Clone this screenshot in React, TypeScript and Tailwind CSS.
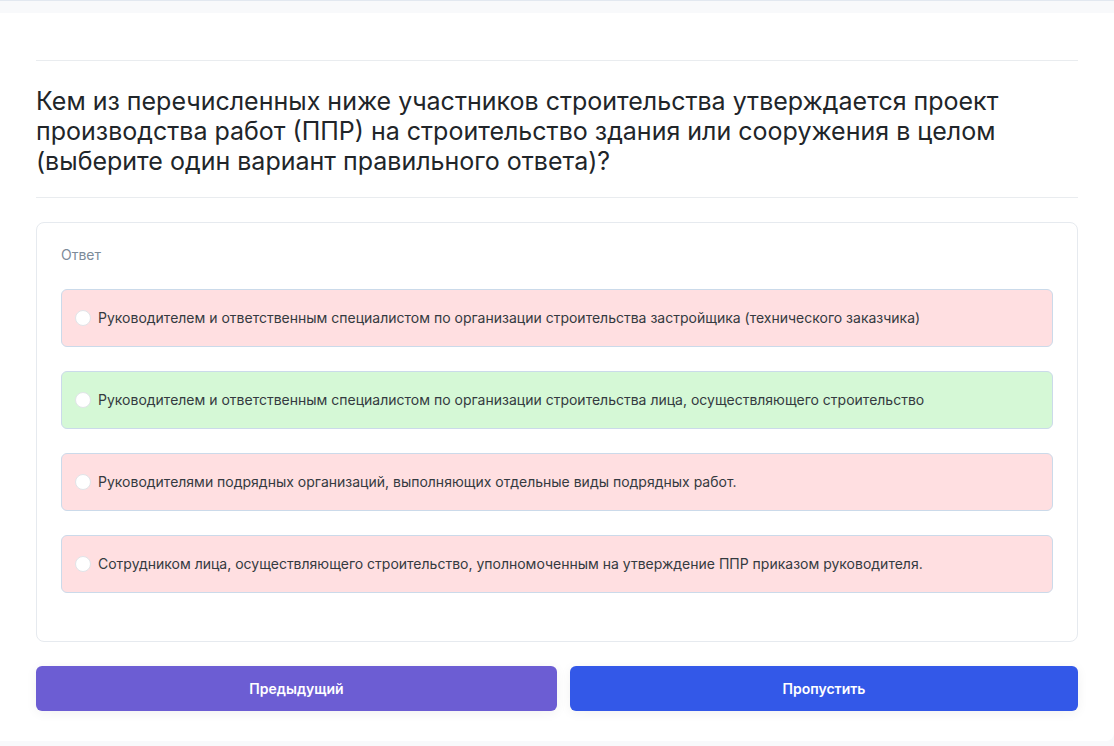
const options = [
  {
    text: "Руководителем и ответственным специалистом по организации строительства застройщика (технического заказчика)",
    correct: false,
  },
  {
    text: "Руководителем и ответственным специалистом по организации строительства лица, осуществляющего строительство",
    correct: true,
  },
  {
    text: "Руководителями подрядных организаций, выполняющих отдельные виды подрядных работ.",
    correct: false,
  },
  {
    text: "Сотрудником лица, осуществляющего строительство, уполномоченным на утверждение ППР приказом руководителя.",
    correct: false,
  },
];

export default function App() {
  return (
    <div className="min-h-screen bg-[#f8f9fb] border-t border-[#e2e8f0] pt-3 font-['Inter',sans-serif]">
      <div className="w-full bg-white rounded-br-lg px-9 pt-[47px] pb-[30px]">
        {/* Question */}
        <div className="border-t border-[#e9ecef]" />
        <h1 className="mt-[25px] mb-[21px] text-[25px] leading-[30px] text-[#212529] font-normal">
          Кем из перечисленных ниже участников строительства утверждается проект производства работ (ППР) на
          строительство здания или сооружения в целом (выберите один вариант правильного ответа)?
        </h1>
        <div className="border-t border-[#e9ecef]" />

        {/* Answers */}
        <div className="mt-6 border border-[#e6eaef] rounded-lg px-6 pt-[22px] pb-[48px]">
          <div className="text-sm leading-5 text-[#7d8b99] mb-6">Ответ</div>
          <div className="flex flex-col gap-6">
            {options.map((o) => (
              <label
                key={o.text}
                className={`flex items-center h-[58px] pl-[13px] pr-4 rounded-md border border-[#cbdaea] ${
                  o.correct ? "bg-[#d5f8d6]" : "bg-[#ffdfe1]"
                }`}
              >
                <span className="w-4 h-4 rounded-full bg-white border border-[#e1e4e8] shrink-0" />
                <span className="ml-[7px] text-sm text-[#343a40]">{o.text}</span>
              </label>
            ))}
          </div>
        </div>

        {/* Buttons */}
        <div className="mt-6 flex">
          <button className="w-1/2 h-[45px] rounded-md bg-[#6c5dd3] text-white text-sm font-semibold shadow-[0_2px_12px_rgba(0,0,0,0.06)]">
            Предыдущий
          </button>
          <button className="flex-1 ml-[13px] h-[45px] rounded-md bg-[#3358e8] text-white text-sm font-semibold shadow-[0_2px_12px_rgba(0,0,0,0.06)]">
            Пропустить
          </button>
        </div>
      </div>
    </div>
  );
}
